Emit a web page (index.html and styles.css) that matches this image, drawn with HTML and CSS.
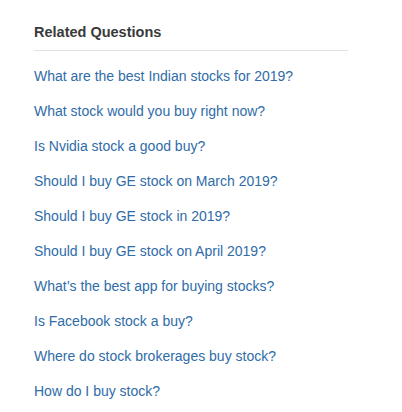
FILE: index.html
```html
<!DOCTYPE html>
<html>
<head>
<meta charset="utf-8">
<link rel="stylesheet" href="styles.css">
</head>
<body>
<div class="related">
  <h3 class="title">Related Questions</h3>
  <ul class="list">
    <li><a href="#">What are the best Indian stocks for 2019?</a></li>
    <li><a href="#">What stock would you buy right now?</a></li>
    <li><a href="#">Is Nvidia stock a good buy?</a></li>
    <li><a href="#">Should I buy GE stock on March 2019?</a></li>
    <li><a href="#">Should I buy GE stock in 2019?</a></li>
    <li><a href="#">Should I buy GE stock on April 2019?</a></li>
    <li><a href="#">What’s the best app for buying stocks?</a></li>
    <li><a href="#">Is Facebook stock a buy?</a></li>
    <li><a href="#">Where do stock brokerages buy stock?</a></li>
    <li><a href="#">How do I buy stock?</a></li>
  </ul>
</div>
</body>
</html>
```
FILE: styles.css
```css
html, body {
  margin: 0;
  padding: 0;
  background: #fff;
}
body {
  font-family: "Liberation Sans", Arial, Helvetica, sans-serif;
}
.related {
  width: 314px;
  margin-left: 34px;
  padding-top: 23px;
}
.title {
  margin: 0;
  font-size: 14.5px;
  font-weight: bold;
  color: #3a3a3a;
  line-height: 18px;
  padding-bottom: 9px;
  border-bottom: 1px solid #e2e2e2;
}
.list {
  list-style: none;
  margin: 0;
  padding: 15px 0 0 0;
}
.list li {
  height: 35px;
  line-height: 20px;
  font-size: 14px;
}
.list a {
  color: #2f6ca8;
  text-decoration: none;
}
```
